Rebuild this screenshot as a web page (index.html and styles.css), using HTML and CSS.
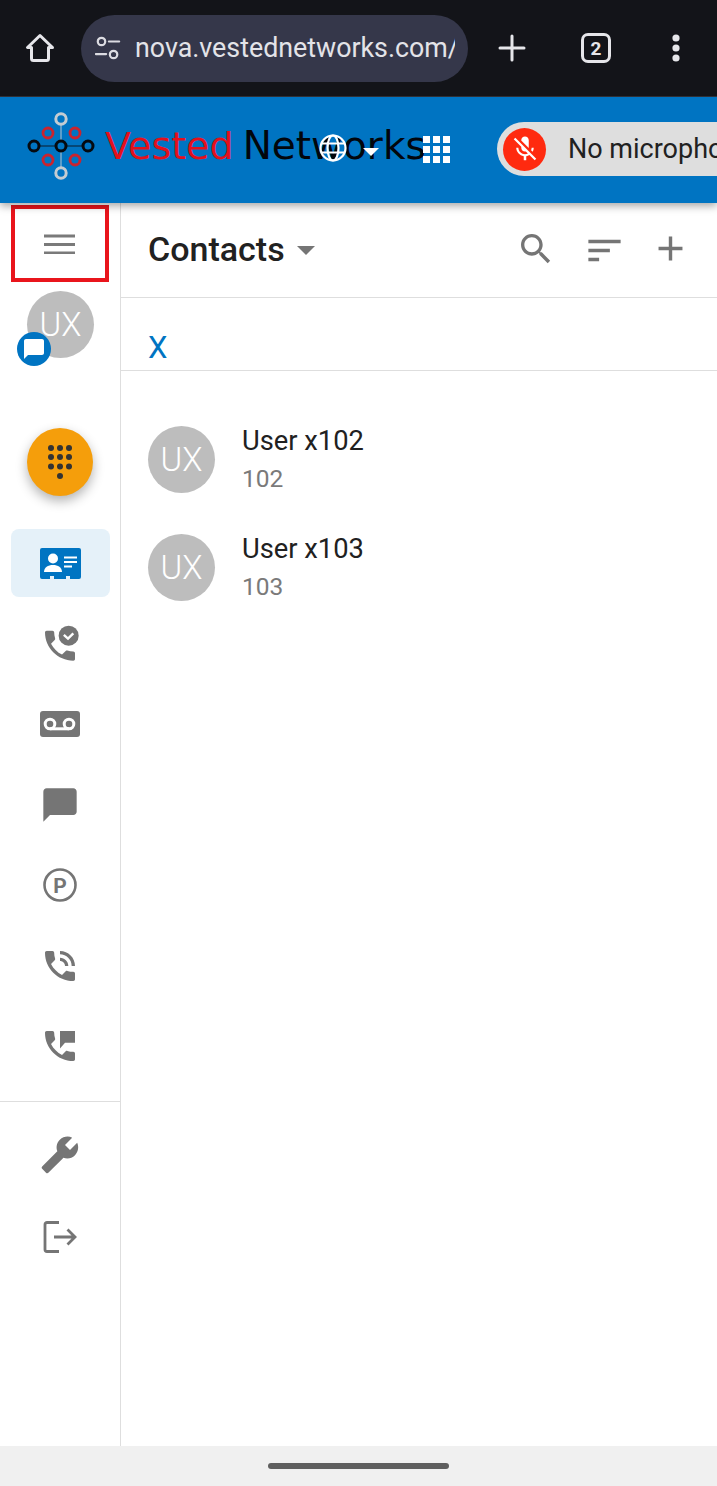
FILE: index.html
```html
<!DOCTYPE html>
<html lang="en">
<head>
<meta charset="utf-8">
<title>Contacts</title>
<link rel="stylesheet" href="styles.css">
</head>
<body>
<div class="browser">
  <svg class="b-home" viewBox="0 0 32 32"><path d="M16 3.500 3.500 15.500h4v11a2 2 0 0 0 2 2h13a2 2 0 0 0 2-2v-11h4z" fill="none" stroke="#e6e6ea" stroke-width="3" stroke-linejoin="round"/></svg>
  <div class="urlbar">
    <svg class="tune" viewBox="0 0 28 28"><circle cx="7" cy="7" r="4" fill="none" stroke="#dcdce2" stroke-width="2.400"/><path d="M15 7h11M1 20.500h11" stroke="#dcdce2" stroke-width="2.400" stroke-linecap="round"/><circle cx="20" cy="21" r="4" fill="none" stroke="#dcdce2" stroke-width="2.400"/></svg>
    <div class="url">nova.vestednetworks.com/</div>
  </div>
  <svg class="b-plus" viewBox="0 0 28 28"><path d="M14 2v24M2 14h24" stroke="#e6e6ea" stroke-width="3" stroke-linecap="round"/></svg>
  <div class="tabs">2</div>
  <svg class="b-more" viewBox="0 0 8 28"><circle cx="4" cy="4" r="3.600" fill="#e6e6ea"/><circle cx="4" cy="14" r="3.600" fill="#e6e6ea"/><circle cx="4" cy="24" r="3.600" fill="#e6e6ea"/></svg>
</div>

<header class="topbar">
  <div class="logo">
    <svg class="logo-mark" viewBox="0 0 70 70">
      <path d="M7 35h54" stroke="#0a1a2a" stroke-width="1"/>
      <path d="M34 8v54" stroke="#b9c7d2" stroke-width="1"/>
      <g fill="none" stroke="#c9242f" stroke-width="2.800"><circle cx="21" cy="22" r="5"/><circle cx="48" cy="22" r="5"/><circle cx="21" cy="49" r="5"/><circle cx="48" cy="49" r="5"/></g>
      <g fill="#0074c2" stroke="#c4ccd2" stroke-width="3"><circle cx="34" cy="8" r="5.200"/><circle cx="34" cy="62" r="5.200"/></g>
      <g fill="#0074c2" stroke="#050a10" stroke-width="3"><circle cx="7" cy="35" r="5"/><circle cx="34" cy="35" r="5"/><circle cx="61" cy="35" r="5"/></g>
    </svg>
    <span class="logo-a">Vested</span><span class="logo-b">Networks</span>
  </div>
  <svg class="globe" viewBox="0 0 28 28"><g fill="none" stroke="#fff" stroke-width="2.200"><circle cx="14" cy="14" r="12.500"/><ellipse cx="14" cy="14" rx="5.500" ry="12.500"/><path d="M2.500 9.500h23M2.500 18.500h23"/></g></svg>
  <div class="caret-w"></div>
  <div class="waffle"><i></i><i></i><i></i><i></i><i></i><i></i><i></i><i></i><i></i></div>
  <div class="micpill">
    <span class="micdot"><svg viewBox="0 0 24 24"><path fill="#fff" d="M19 11h-1.700c0 .74-.16 1.430-.43 2.050l1.230 1.230c.56-.98.9-2.090.9-3.280zm-4.020.17c0-.06.02-.11.02-.17V5c0-1.660-1.340-3-3-3S9 3.340 9 5v.18l5.980 5.990zM4.270 3 3 4.270l6.010 6.010V11c0 1.660 1.330 3 2.990 3 .22 0 .44-.03.65-.08l1.660 1.660c-.71.33-1.500.52-2.310.52-2.760 0-5.300-2.100-5.300-5.100H5c0 3.410 2.720 6.230 6 6.720V21h2v-3.280c.91-.13 1.770-.45 2.540-.9L19.730 21 21 19.730 4.270 3z"/></svg></span>
    <span class="mictext">No microphone</span>
  </div>
</header>

<div class="layout">
  <aside class="sidebar">
    <div class="menu-box"><svg class="burger" viewBox="0 0 32 20"><path d="M0 2h31M0 10.500h31M0 19h31" stroke="#7a7a7a" stroke-width="2.800"/></svg></div>
    <div class="me">
      <div class="avatar">UX</div>
      <span class="badge"><svg viewBox="0 0 24 24"><path fill="#fff" d="M20 2H4c-1.100 0-2 .9-2 2v18l4-4h14c1.100 0 2-.9 2-2V4c0-1.100-.9-2-2-2z"/></svg></span>
    </div>
    <div class="dial"><svg viewBox="0 0 24 34"><g fill="#333"><circle cx="3" cy="3" r="3"/><circle cx="12" cy="3" r="3"/><circle cx="21" cy="3" r="3"/><circle cx="3" cy="12" r="3"/><circle cx="12" cy="12" r="3"/><circle cx="21" cy="12" r="3"/><circle cx="3" cy="21.500" r="3"/><circle cx="12" cy="21.500" r="3"/><circle cx="21" cy="21.500" r="3"/><circle cx="12" cy="31" r="3"/></g></svg></div>
    <nav class="nav">
      <div class="item active"><svg class="card" viewBox="0 0 41 31"><path fill="#0074c2" d="M2 0h37a2 2 0 0 1 2 2v27a2 2 0 0 1-2 2h-9v-3h-4v3H14v-3h-4v3H2a2 2 0 0 1-2-2V2a2 2 0 0 1 2-2z"/><circle cx="13" cy="10.500" r="5" fill="#fff"/><path fill="#fff" d="M4 24c0-4.500 4-7 9-7s9 2.500 9 7z"/><path d="M24 9.500h13M24 14h13M24 18.500h8" stroke="#fff" stroke-width="2"/></svg></div>
      <div class="item"><svg class="ic" viewBox="0 0 24 24"><path d="M20 16.500c-1.250 0-2.450-.2-3.570-.57-.35-.11-.74-.03-1.020.24l-2.200 2.200c-2.830-1.440-5.150-3.750-6.590-6.590l2.200-2.210c.28-.26.36-.65.25-1C8.700 7.450 8.500 6.250 8.500 5c0-.55-.45-1-1-1H4c-.55 0-1 .45-1 1 0 9.390 7.610 17 17 17 .55 0 1-.45 1-1v-3.500c0-.55-.45-1-1-1z"/><circle cx="17.200" cy="7" r="6"/><path d="M14.300 6.500l2.500 2.300 3.200-3.200" fill="none" stroke="#fff" stroke-width="1.400"/></svg></div>
      <div class="item"><svg class="vm" viewBox="0 0 40 26"><rect width="40" height="26" rx="3" fill="#757575"/><g fill="none" stroke="#fff" stroke-width="3"><circle cx="10" cy="13" r="4.800"/><circle cx="29" cy="13" r="4.800"/><path d="M10 17.800h19"/></g></svg></div>
      <div class="item"><svg class="ic" viewBox="0 0 24 24"><path d="M20 2H4c-1.100 0-2 .9-2 2v18l4-4h14c1.100 0 2-.9 2-2V4c0-1.100-.9-2-2-2z"/></svg></div>
      <div class="item"><svg class="ic" viewBox="0 0 40 40"><circle cx="20" cy="20" r="15.500" fill="none" stroke="#757575" stroke-width="2.600"/><text x="20" y="27.500" class="park">P</text></svg></div>
      <div class="item"><svg class="ic" viewBox="0 0 24 24"><path d="M20 15.500c-1.250 0-2.450-.2-3.570-.57-.35-.11-.74-.03-1.020.24l-2.200 2.200c-2.830-1.440-5.150-3.750-6.590-6.590l2.200-2.210c.28-.26.36-.65.25-1C8.700 6.450 8.500 5.250 8.500 4c0-.55-.45-1-1-1H4c-.55 0-1 .45-1 1 0 9.390 7.610 17 17 17 .55 0 1-.45 1-1v-3.500c0-.55-.45-1-1-1zM19 12h2c0-4.970-4.030-9-9-9v2c3.870 0 7 3.130 7 7zm-4 0h2c0-2.760-2.240-5-5-5v2c1.660 0 3 1.340 3 3z"/></svg></div>
      <div class="item"><svg class="ic" viewBox="0 0 24 24"><path d="M20 15.500c-1.250 0-2.450-.2-3.570-.57-.35-.11-.74-.03-1.020.24l-2.200 2.200c-2.830-1.440-5.150-3.750-6.590-6.590l2.200-2.210c.28-.26.36-.65.25-1C8.700 6.450 8.500 5.250 8.500 4c0-.55-.45-1-1-1H4c-.55 0-1 .45-1 1 0 9.390 7.610 17 17 17 .55 0 1-.45 1-1v-3.500c0-.55-.45-1-1-1zM12 3h9v7h-6l-3 3.500z"/></svg></div>
    </nav>
    <div class="side-rule"></div>
    <div class="tools">
      <div class="item"><svg class="ic" viewBox="0 0 24 24"><path transform="rotate(90 12 12)" d="M22.700 19l-9.100-9.100c.9-2.300.4-5-1.500-6.900-2-2-5-2.400-7.400-1.300L9 6 6 9 1.600 4.700C.4 7.100.9 10.100 2.900 12.100c1.900 1.900 4.600 2.400 6.900 1.500l9.100 9.100c.4.4 1 .4 1.400 0l2.300-2.300c.5-.4.5-1.100.1-1.400z"/></svg></div>
      <div class="item"><svg class="ic" viewBox="0 0 40 40"><path d="M19 5.500H7a2 2 0 0 0-2 2v25a2 2 0 0 0 2 2h12M14 20h21M27.500 12.500 35 20l-7.500 7.500" fill="none" stroke="#757575" stroke-width="2.800"/></svg></div>
    </div>
  </aside>

  <main class="content">
    <div class="title-row">
      <h1 class="title">Contacts</h1>
      <span class="caret-g"></span>
      <div class="actions">
        <svg class="ic" viewBox="0 0 24 24"><path d="M15.500 14h-.79l-.28-.27C15.410 12.590 16 11.110 16 9.500 16 5.910 13.090 3 9.500 3S3 5.910 3 9.500 5.910 16 9.500 16c1.610 0 3.090-.59 4.230-1.570l.27.28v.79l5 4.990L20.490 19l-4.990-5zm-6 0C7.010 14 5 11.990 5 9.500S7.010 5 9.500 5 14 7.010 14 9.500 11.990 14 9.500 14z"/></svg>
        <svg class="ic sort" viewBox="0 0 24 24"><path d="M3 18h6v-2H3v2zM3 6v2h18V6H3zm0 7h12v-2H3v2z"/></svg>
        <svg class="ic plus" viewBox="0 0 24 24"><path d="M19 13h-6v6h-2v-6H5v-2h6V5h2v6h6v2z"/></svg>
      </div>
    </div>
    <div class="filter-row">X</div>
    <div class="list">
      <div class="contact">
        <div class="avatar">UX</div>
        <div class="who"><div class="name">User x102</div><div class="ext">102</div></div>
      </div>
      <div class="contact">
        <div class="avatar">UX</div>
        <div class="who"><div class="name">User x103</div><div class="ext">103</div></div>
      </div>
    </div>
  </main>
</div>

<div class="gesture"><span class="handle"></span></div>
</body>
</html>
```

FILE: styles.css
```css
* { box-sizing: border-box; }
html, body { margin: 0; padding: 0; }
body {
  width: 717px;
  height: 1486px;
  overflow: hidden;
  display: flex;
  flex-direction: column;
  background: #fff;
  font-family: Roboto, "Liberation Sans", sans-serif;
  color: #212121;
}

/* browser chrome */
.browser {
  flex: none;
  height: 97px;
  background: #131419;
  border-bottom: 1px solid #33343c;
  display: flex;
  align-items: center;
}
.b-home { width: 32px; height: 32px; margin-left: 24px; flex: none; }
.urlbar {
  flex: none;
  width: 387px;
  height: 67px;
  margin-left: 25px;
  border-radius: 34px;
  background: #35374a;
  display: flex;
  align-items: center;
  padding-left: 14px;
}
.tune { width: 26px; height: 26px; flex: none; }
.url {
  margin-left: 14px;
  width: 320px;
  overflow: hidden;
  white-space: nowrap;
  font-size: 26.800px;
  color: #e3e3e8;
}
.b-plus { width: 28px; height: 28px; margin-left: 30px; flex: none; }
.tabs {
  flex: none;
  width: 30px;
  height: 30px;
  margin-left: 55px;
  border: 3px solid #e6e6ea;
  border-radius: 7px;
  color: #e6e6ea;
  font-size: 19px;
  font-weight: 700;
  display: flex;
  align-items: center;
  justify-content: center;
}
.b-more { width: 8px; height: 28px; margin-left: 61px; flex: none; }

/* blue app bar */
.topbar {
  flex: none;
  position: relative;
  z-index: 2;
  height: 106px;
  background: #0074c2;
  box-shadow: 0 3px 8px rgba(0, 0, 0, .35);
  display: flex;
  align-items: center;
  overflow-x: clip;
  padding-left: 27px;
}
.logo {
  flex: none;
  width: 292px;
  height: 70px;
  margin-top: -8px;
  display: flex;
  align-items: baseline;
  white-space: nowrap;
  font-family: "DejaVu Sans", sans-serif;
}
.logo-mark { width: 70px; height: 70px; flex: none; align-self: center; }
.logo-a { margin: 13px 0 0 8px; font-size: 38px; color: #e3101c; }
.logo-b { margin-left: 9px; font-size: 39px; color: #02060c; }
.globe { flex: none; width: 28px; height: 28px; position: relative; margin-top: -4px; }
.caret-w {
  flex: none;
  position: relative;
  width: 0; height: 0;
  margin-left: 16px;
  margin-top: 3px;
  border-left: 8px solid transparent;
  border-right: 8px solid transparent;
  border-top: 8px solid #fff;
}
.waffle {
  flex: none;
  position: relative;
  width: 28px; height: 28px;
  margin-left: 44px;
  display: grid;
  grid-template-columns: repeat(3, 7px);
  grid-auto-rows: 7px;
  gap: 3px;
}
.waffle i { background: #fff; display: block; }
.micpill {
  flex: none;
  width: 300px;
  height: 54px;
  margin-left: 46px;
  margin-top: -2px;
  border-radius: 27px 0 0 27px;
  background: #dedede;
  display: flex;
  align-items: center;
  padding-left: 6px;
}
.micdot {
  flex: none;
  width: 43px;
  height: 43px;
  border-radius: 50%;
  background: #ff2a0f;
  display: flex;
  align-items: center;
  justify-content: center;
}
.micdot svg { width: 30px; height: 30px; }
.mictext { margin-left: 22px; font-size: 27px; color: #212121; white-space: nowrap; }

/* body */
.layout { flex: 1; display: flex; min-height: 0; }
.sidebar {
  flex: none;
  width: 121px;
  border-right: 1px solid #dedede;
  padding-top: 2px;
  display: flex;
  flex-direction: column;
  align-items: stretch;
}
.menu-box {
  width: 98px;
  height: 77px;
  margin-left: 11px;
  border: 4px solid #e9151c;
  display: flex;
  align-items: center;
  justify-content: center;
}
.burger { width: 32px; height: 20px; }
.me { position: relative; width: 67px; height: 67px; margin: 9px 0 0 27px; }
.avatar {
  flex: none;
  width: 67px;
  height: 67px;
  border-radius: 50%;
  background: #bdbdbd;
  color: #fff;
  font-size: 33px;
  font-weight: 300;
  display: flex;
  align-items: center;
  justify-content: center;
}
.badge {
  position: absolute;
  left: -10px;
  top: 41px;
  width: 34px;
  height: 34px;
  border-radius: 50%;
  background: #0074c2;
  display: flex;
  align-items: center;
  justify-content: center;
}
.badge svg { width: 24px; height: 24px; }
.dial {
  width: 66px;
  height: 68px;
  margin: 70px 0 0 27px;
  border-radius: 50%;
  background: #f59e0b;
  box-shadow: 0 5px 12px rgba(0, 0, 0, .3);
  display: flex;
  align-items: center;
  justify-content: center;
}
.dial svg { width: 24px; height: 34px; }
.nav { margin-top: 33px; display: flex; flex-direction: column; gap: 12.500px; padding-left: 11px; }
.item {
  width: 99px;
  height: 68px;
  padding-right: 1px;
  border-radius: 8px;
  display: flex;
  align-items: center;
  justify-content: center;
}
.active { background: #e5f1f9; }
.card { width: 41px; height: 31px; }
.vm { width: 40px; height: 26px; }
.ic { width: 40px; height: 40px; flex: none; fill: #757575; }
.park { font-family: Roboto, sans-serif; font-size: 21px; font-weight: 700; fill: #757575; text-anchor: middle; }
.side-rule { height: 1px; background: #dedede; margin-top: 21px; }
.tools { margin-top: 19px; padding-left: 11px; display: flex; flex-direction: column; gap: 14px; }

/* contacts */
.content { flex: 1; min-width: 0; }
.title-row {
  height: 95px;
  border-bottom: 1px solid #dedede;
  display: flex;
  align-items: center;
  padding: 0 26px 3px 27px;
}
.title { margin: 0; font-size: 34px; font-weight: 500; color: #212121; }
.caret-g {
  margin: 3px 0 0 12px;
  width: 0; height: 0;
  border-left: 9px solid transparent;
  border-right: 9px solid transparent;
  border-top: 9px solid #757575;
}
.actions { margin-left: auto; display: flex; align-items: center; gap: 27px; }
.sort { width: 43px; height: 43px; margin-top: 4px; }
.plus { width: 41px; height: 41px; margin-left: -3px; }
.filter-row {
  height: 73px;
  border-bottom: 1px solid #dedede;
  padding: 32px 0 0 27px;
  font-size: 31px;
  line-height: 36px;
  color: #0074c2;
}
.list { padding: 55px 0 0 27px; display: flex; flex-direction: column; gap: 41px; }
.contact { display: flex; align-items: center; gap: 27px; }
.name { padding-top: 1px; font-size: 27.300px; line-height: 29px; color: #212121; }
.ext { margin-top: 8px; font-size: 24.500px; line-height: 29px; color: #7a7a7a; }

/* gesture bar */
.gesture {
  flex: none;
  height: 40px;
  background: #f0f0f0;
  display: flex;
  align-items: center;
  justify-content: center;
}
.handle { width: 181px; height: 6px; border-radius: 3px; background: #5f5f5f; }
```
